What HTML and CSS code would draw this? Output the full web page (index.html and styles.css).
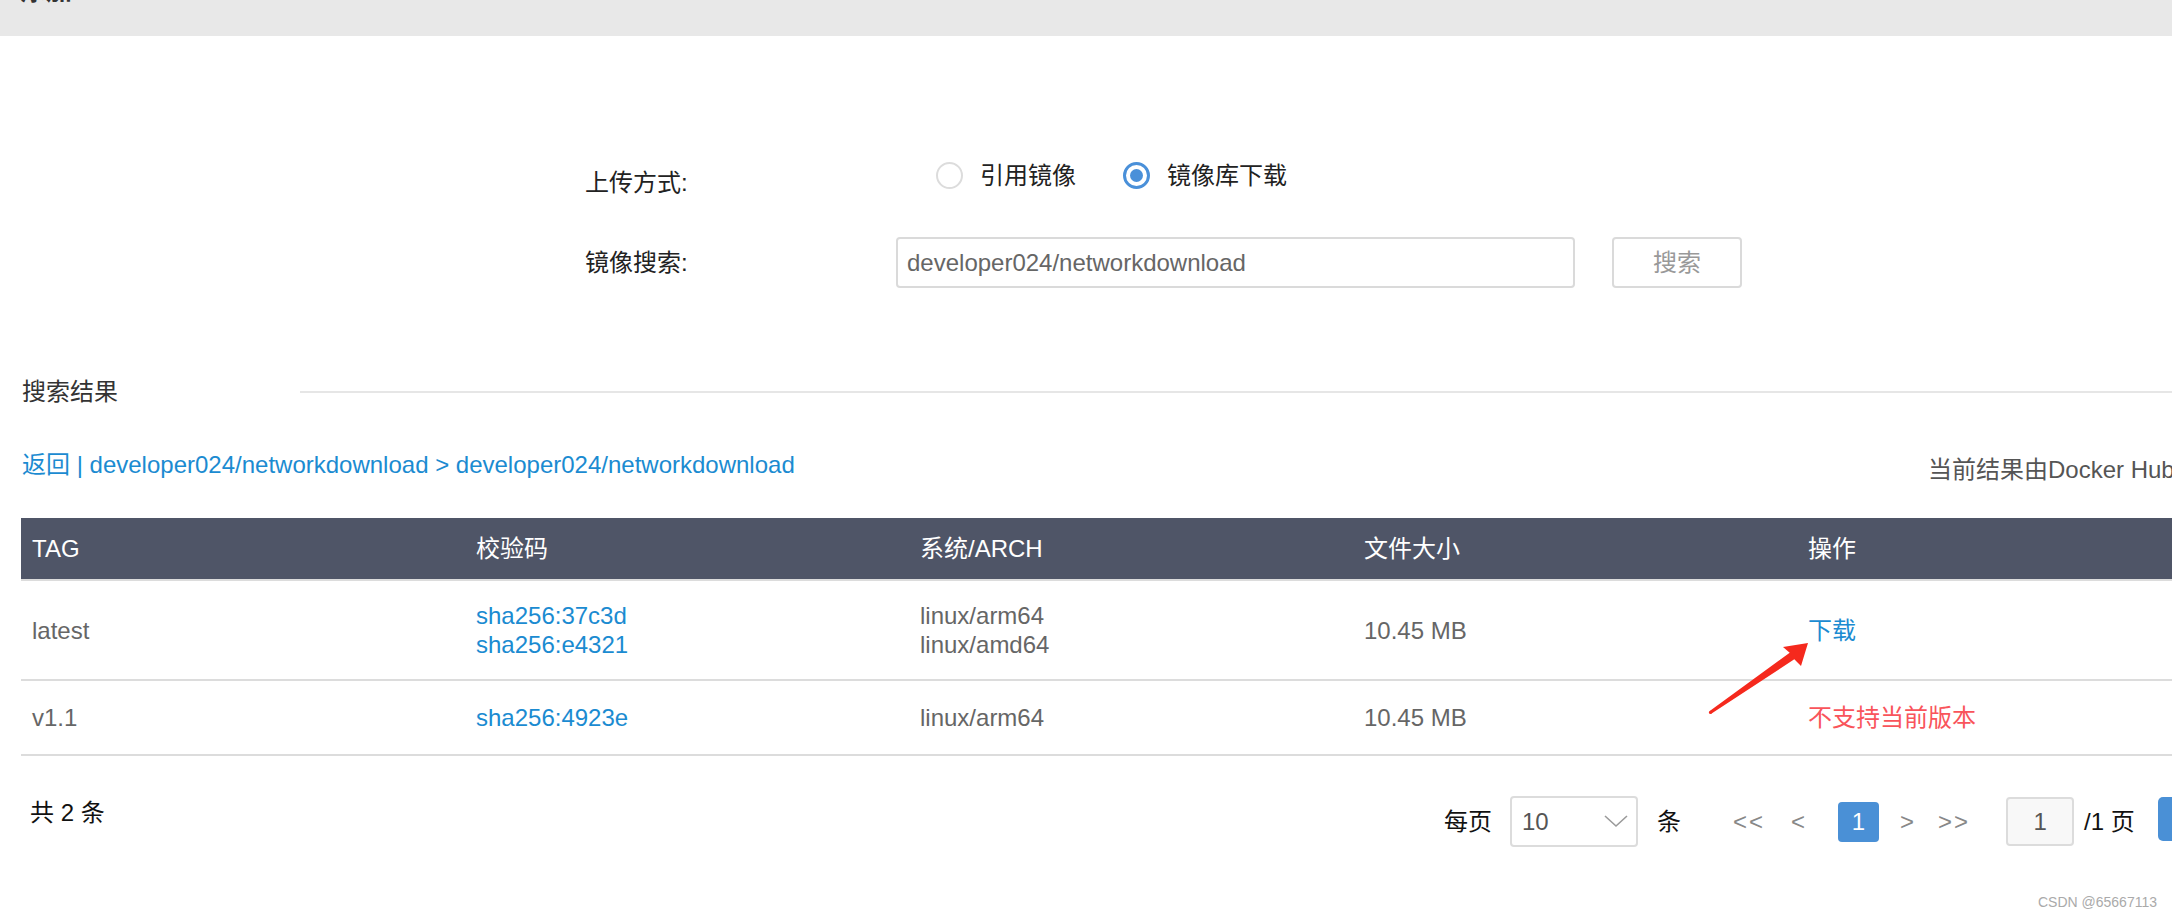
FILE: index.html
```html
<!DOCTYPE html>
<html lang="zh-CN">
<head>
<meta charset="utf-8">
<title>添加</title>
<link rel="stylesheet" href="styles.css">
</head>
<body>
<div class="topbar"><div class="title">添加</div></div>

<div class="form">
  <div class="form-row">
    <div class="label">上传方式:</div>
    <div class="radios">
      <div class="radio"><span class="dot"></span>引用镜像</div>
      <div class="radio checked"><span class="dot"></span>镜像库下载</div>
    </div>
  </div>
  <div class="form-row">
    <div class="label">镜像搜索:</div>
    <div class="input">developer024/networkdownload</div>
    <div class="btn">搜索</div>
  </div>
</div>

<div class="section-title"><span>搜索结果</span><div class="rule"></div></div>

<div class="info">
  <div class="crumb">返回 | developer024/networkdownload &gt; developer024/networkdownload</div>
  <div class="source">当前结果由Docker Hub提供</div>
</div>

<div class="table">
  <div class="tr th">
    <div class="cell">TAG</div>
    <div class="cell">校验码</div>
    <div class="cell">系统/ARCH</div>
    <div class="cell">文件大小</div>
    <div class="cell">操作</div>
  </div>
  <div class="tr r1">
    <div class="cell">latest</div>
    <div class="cell link">sha256:37c3d<br>sha256:e4321</div>
    <div class="cell">linux/arm64<br>linux/amd64</div>
    <div class="cell">10.45 MB</div>
    <div class="cell link">下载</div>
  </div>
  <div class="tr r2">
    <div class="cell">v1.1</div>
    <div class="cell link">sha256:4923e</div>
    <div class="cell">linux/arm64</div>
    <div class="cell">10.45 MB</div>
    <div class="cell err">不支持当前版本</div>
  </div>
</div>

<div class="footer">
  <div class="total">共 2 条</div>
  <div class="pager">
    <span class="txt">每页</span>
    <div class="select"><span>10</span>
      <svg class="chev" width="24" height="13" viewBox="0 0 24 13"><path d="M1 1 L12 11 L23 1" fill="none" stroke="#9a9a9a" stroke-width="1.6"/></svg>
    </div>
    <span class="txt unit">条</span>
    <span class="nav first">&lt;&lt;</span>
    <span class="nav prev">&lt;</span>
    <span class="cur">1</span>
    <span class="nav next">&gt;</span>
    <span class="nav last">&gt;&gt;</span>
    <div class="page-input">1</div>
    <span class="txt of">/1 页</span>
    <div class="go">跳转</div>
  </div>
</div>

<svg class="arrow" width="2172" height="918" viewBox="0 0 2172 918">
  <polygon points="1709.4,711.2 1789.7,652.7 1783,647 1808,643 1801,666 1794.3,659.3 1711.6,713.6" fill="#f5291d"/>
  <circle cx="1710.5" cy="712.4" r="1.6" fill="#f5291d"/>
</svg>

<div class="watermark">CSDN @65667113</div>
</body>
</html>
```

FILE: styles.css
```css
* { box-sizing: border-box; }
html, body { margin: 0; padding: 0; overflow: hidden; background: #fff; }
body {
  width: 2172px;
  height: 918px;
  position: relative;
  font-family: "Liberation Sans", "Noto Sans CJK SC", sans-serif;
  font-size: 24px;
  color: #222;
}

.topbar { height: 36px; background: #e8e8e8; padding-left: 20px; overflow: hidden; }
.title { font-size: 26px; line-height: 26px; margin-top: -22px; font-weight: bold; color: #333; }

.form { padding: 121px 0 0 585px; display: flex; flex-direction: column; gap: 29px; }
.form-row { display: flex; align-items: center; height: 51px; }
.label { width: 311px; line-height: 34px; color: #222; }
.radios { display: flex; align-items: center; margin-left: 40px; margin-bottom: 14px; gap: 47px; }
.radio { display: flex; align-items: center; gap: 17px; line-height: 34px; color: #222; }
.dot {
  width: 27px; height: 27px; border: 2px solid #dcdcdc; border-radius: 50%;
  display: flex; align-items: center; justify-content: center;
}
.radio.checked .dot { border: 3px solid #4a90d9; }
.radio.checked .dot::after { content: ""; width: 13px; height: 13px; border-radius: 50%; background: #4a90d9; }
.input {
  width: 679px; height: 51px; border: 2px solid #dadada; border-radius: 4px;
  padding-left: 9px; line-height: 47px; color: #666;
}
.btn {
  margin-left: 37px; width: 130px; height: 51px; border: 2px solid #dadada; border-radius: 4px;
  text-align: center; line-height: 47px; color: #999; background: #fff;
}

.section-title { display: flex; align-items: center; margin-top: 87px; padding-left: 22px; height: 34px; }
.section-title span { width: 278px; color: #333; line-height: 34px; }
.rule { flex: 1; height: 2px; background: #e6e6e6; }

.info { display: flex; height: 39px; margin-top: 39px; padding-left: 22px; white-space: nowrap; }
.crumb { width: 1906px; flex: 0 0 1906px; line-height: 34px; color: #1b8bd1; align-self: flex-start; }
.source { align-self: flex-end; line-height: 34px; color: #555; }

.table { margin-top: 31px; margin-left: 21px; width: 2220px; }
.tr {
  display: grid; grid-template-columns: repeat(5, 444px); align-items: center;
  border-bottom: 2px solid #dcdcdc;
}
.th { height: 63px; background: #4f5567; }
.th .cell { color: #fff; }
.r1 { height: 100px; }
.r2 { height: 75px; }
.cell { padding-left: 11px; line-height: 29px; color: #666; white-space: nowrap; }
.cell.link { color: #1b8bd1; }
.cell.err { color: #f9545b; }

.footer { display: flex; align-items: flex-start; margin-top: 40px; padding-left: 30px; white-space: nowrap; }
.total { flex: 0 0 1414px; line-height: 34px; color: #111; }
.pager { display: flex; align-items: center; height: 51px; }
.txt { color: #111; line-height: 34px; }
.select {
  margin-left: 18px; width: 128px; height: 51px; border: 2px solid #dcdcdc; border-radius: 4px;
  display: flex; align-items: center; justify-content: space-between; padding: 0 8px 0 10px; color: #555;
}
.chev { display: block; }
.unit { margin-left: 19px; }
.nav { color: #888; line-height: 34px; letter-spacing: 2px; }
.first { margin-left: 52px; }
.prev { margin-left: 26px; }
.cur {
  margin-left: 31px; width: 41px; height: 40px; background: #4a90d6; color: #fff;
  border-radius: 4px; text-align: center; line-height: 40px;
}
.next { margin-left: 21px; }
.last { margin-left: 22px; }
.page-input {
  margin-left: 36px; width: 68px; height: 49px; background: #f8f8f8; border: 2px solid #dcdcdc;
  border-radius: 4px; text-align: center; line-height: 45px; color: #555;
}
.of { margin-left: 10px; }
.go {
  margin-left: 23px; width: 120px; height: 44px; background: #4a90d6; border-radius: 5px;
  align-self: flex-start; margin-top: 1px; color: #fff; text-align: center; line-height: 44px;
}

.arrow { position: absolute; left: 0; top: 0; pointer-events: none; }
.watermark {
  position: absolute; right: 15px; bottom: 8px; font-size: 14px; line-height: 16px;
  color: #aaa; font-family: "Liberation Sans", sans-serif;
}
```
